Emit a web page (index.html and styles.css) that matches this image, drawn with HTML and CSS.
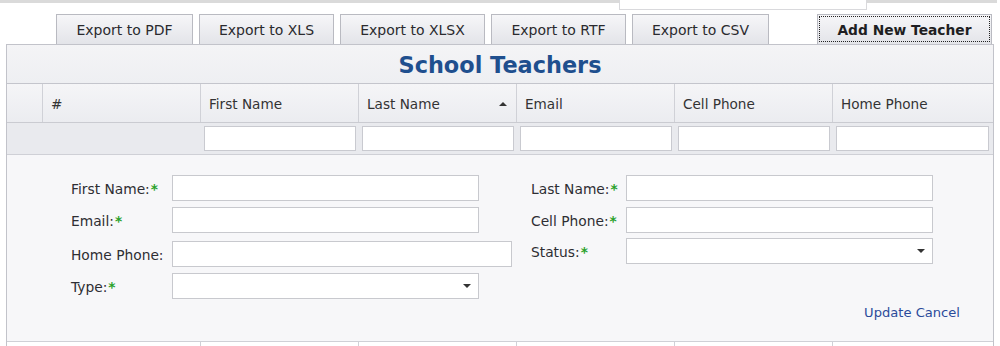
FILE: index.html
```html
<!DOCTYPE html>
<html>
<head>
<meta charset="utf-8">
<link rel="stylesheet" href="styles.css">
</head>
<body>
<div class="topbar"></div>
<div class="popup"></div>
<div class="page">
  <div class="toolbar">
    <button class="btn w136">Export to PDF</button>
    <button class="btn w135">Export to XLS</button>
    <button class="btn w145">Export to XLSX</button>
    <button class="btn w135">Export to RTF</button>
    <button class="btn w137">Export to CSV</button>
    <button class="btn btn-add">Add New Teacher</button>
  </div>
  <div class="grid">
    <div class="title">School Teachers</div>
    <div class="row head">
      <div class="cell c1"></div>
      <div class="cell c2">#</div>
      <div class="cell c3">First Name</div>
      <div class="cell c4 sorted">Last Name <span class="sort-up"></span></div>
      <div class="cell c5">Email</div>
      <div class="cell c6">Cell Phone</div>
      <div class="cell c7">Home Phone</div>
    </div>
    <div class="row filter">
      <div class="fcell c1"></div>
      <div class="fcell c2"></div>
      <div class="fcell c3"><div class="finput"></div></div>
      <div class="fcell c4"><div class="finput"></div></div>
      <div class="fcell c5"><div class="finput"></div></div>
      <div class="fcell c6"><div class="finput"></div></div>
      <div class="fcell c7"><div class="finput last"></div></div>
    </div>
    <div class="form">
      <div class="cols">
        <div class="col left">
          <div class="field"><label>First Name:<span class="req">*</span></label><div class="input"></div></div>
          <div class="field"><label>Email:<span class="req">*</span></label><div class="input"></div></div>
          <div class="field f3"><label>Home Phone:</label><div class="input wide"></div></div>
          <div class="field"><label>Type:<span class="req">*</span></label><div class="input select"><span class="caret"></span></div></div>
        </div>
        <div class="col right">
          <div class="field"><label>Last Name:<span class="req">*</span></label><div class="input"></div></div>
          <div class="field"><label>Cell Phone:<span class="req">*</span></label><div class="input"></div></div>
          <div class="field f3r"><label>Status:<span class="req">*</span></label><div class="input select"><span class="caret"></span></div></div>
        </div>
      </div>
      <div class="actions"><a class="link">Update</a> <a class="link">Cancel</a></div>
    </div>
    <div class="row data">
      <div class="dcell d12"></div>
      <div class="dcell c3"></div>
      <div class="dcell c4"></div>
      <div class="dcell c5"></div>
      <div class="dcell c6"></div>
      <div class="dcell c7"></div>
    </div>
  </div>
</div>
</body>
</html>
```

FILE: styles.css
```css
* { box-sizing: border-box; }
html, body { margin: 0; padding: 0; background: #fff; overflow: hidden; }
body {
  font-family: "DejaVu Sans", Verdana, sans-serif;
  font-size: 13.6px;
  color: #333;
  width: 1000px;
  height: 346px;
  position: relative;
}
.topbar {
  height: 3px;
  width: 997px;
  background: #dadada;
}
.popup {
  position: absolute;
  left: 619px;
  top: 0;
  width: 248px;
  height: 10px;
  background: #fff;
  border: 1px solid #d9d9dc;
  border-top: none;
}
.page {
  padding: 11px 7px 0 6px;
}
.toolbar {
  display: flex;
  gap: 6px;
  padding-left: 50px;
  padding-right: 1px;
  height: 30px;
}
.btn {
  font-family: "DejaVu Sans", Verdana, sans-serif;
  font-size: 14px;
  color: #2a2a2e;
  height: 30px;
  padding: 0;
  border: 1px solid #b9bac1;
  border-bottom: none;
  background: linear-gradient(#f6f6f8, #e3e4e9);
  text-align: center;
}
.w136 { width: 137px; }
.w135 { width: 135px; }
.w145 { width: 145px; }
.w137 { width: 137px; }
.btn-add {
  margin-left: auto;
  width: 175px;
  font-weight: bold;
  font-size: 13.8px;
  color: #1e1e22;
  outline: 1px dotted #222;
  outline-offset: -3px;
}
.grid {
  border: 1px solid #c2c3ca;
  width: 988px;
  background: #fff;
}
.title {
  height: 39px;
  border-bottom: 1px solid #c4c5cc;
  background: linear-gradient(#f4f4f6, #eeeff2);
  text-align: center;
  font-weight: bold;
  font-size: 22.4px;
  color: #1f4f8e;
  line-height: 38px;
  padding-top: 1px;
}
.row { display: flex; }
.c1 { width: 36px; }
.c2 { width: 158px; }
.c3 { width: 158px; }
.c4 { width: 158px; }
.c5 { width: 158px; }
.c6 { width: 158px; }
.c7 { width: 160px; }
.d12 { width: 194px; }
.head {
  height: 39px;
  border-bottom: 1px solid #cacbd1;
  background: linear-gradient(#f5f5f7, #ebecf0);
}
.cell {
  border-right: 1px solid #d0d1d7;
  padding-left: 8px;
  padding-top: 2px;
  display: flex;
  align-items: center;
  line-height: 16px;
}
.cell.c7 { border-right: none; }
.sorted { padding-right: 9px; }
.sort-up {
  margin-left: auto;
  width: 0; height: 0;
  border-left: 4px solid transparent;
  border-right: 4px solid transparent;
  border-bottom: 4px solid #333;
}
.filter {
  height: 32px;
  background: #e9eaee;
  border-bottom: 1px solid #cfd0d6;
}
.fcell { padding: 3px 0 0 3px; }
.finput {
  width: 152px;
  height: 25px;
  background: #fff;
  border: 1px solid #c9cad0;
}
.finput.last { width: 153px; }
.form {
  height: 187px;
  background: #f7f7f9;
  border-bottom: 1px solid #cfd0d6;
  padding: 20px 33px 0 64px;
}
.cols { display: flex; gap: 19px; }
.col { display: flex; flex-direction: column; gap: 6px; }
.left { width: 441px; }
.field { display: flex; align-items: center; }
.field label { padding-top: 1px; }
.field.f3 { margin-top: 2px; }
.field.f3r { margin-top: -1px; }
.left label { width: 101px; }
.right label { width: 95px; }
label { color: #2e2e33; font-size: 13.8px; }
.req { color: #2aa12a; margin-left: 1px; font-weight: bold; }
.input {
  width: 307px;
  height: 26px;
  background: #fff;
  border: 1px solid #c8c9ce;
}
.input.wide { width: 340px; }
.input.select {
  display: flex;
  align-items: center;
  justify-content: flex-end;
  padding-right: 7px;
}
.caret {
  width: 0; height: 0;
  border-left: 4px solid transparent;
  border-right: 4px solid transparent;
  border-top: 4px solid #333;
}
.actions {
  margin-top: 6px;
  text-align: right;
  font-size: 13.1px;
}
.link { color: #2b4b9b; }
.data { height: 10px; }
.dcell { border-right: 1px solid #d0d1d7; height: 10px; }
.dcell.c7 { border-right: none; }
```
